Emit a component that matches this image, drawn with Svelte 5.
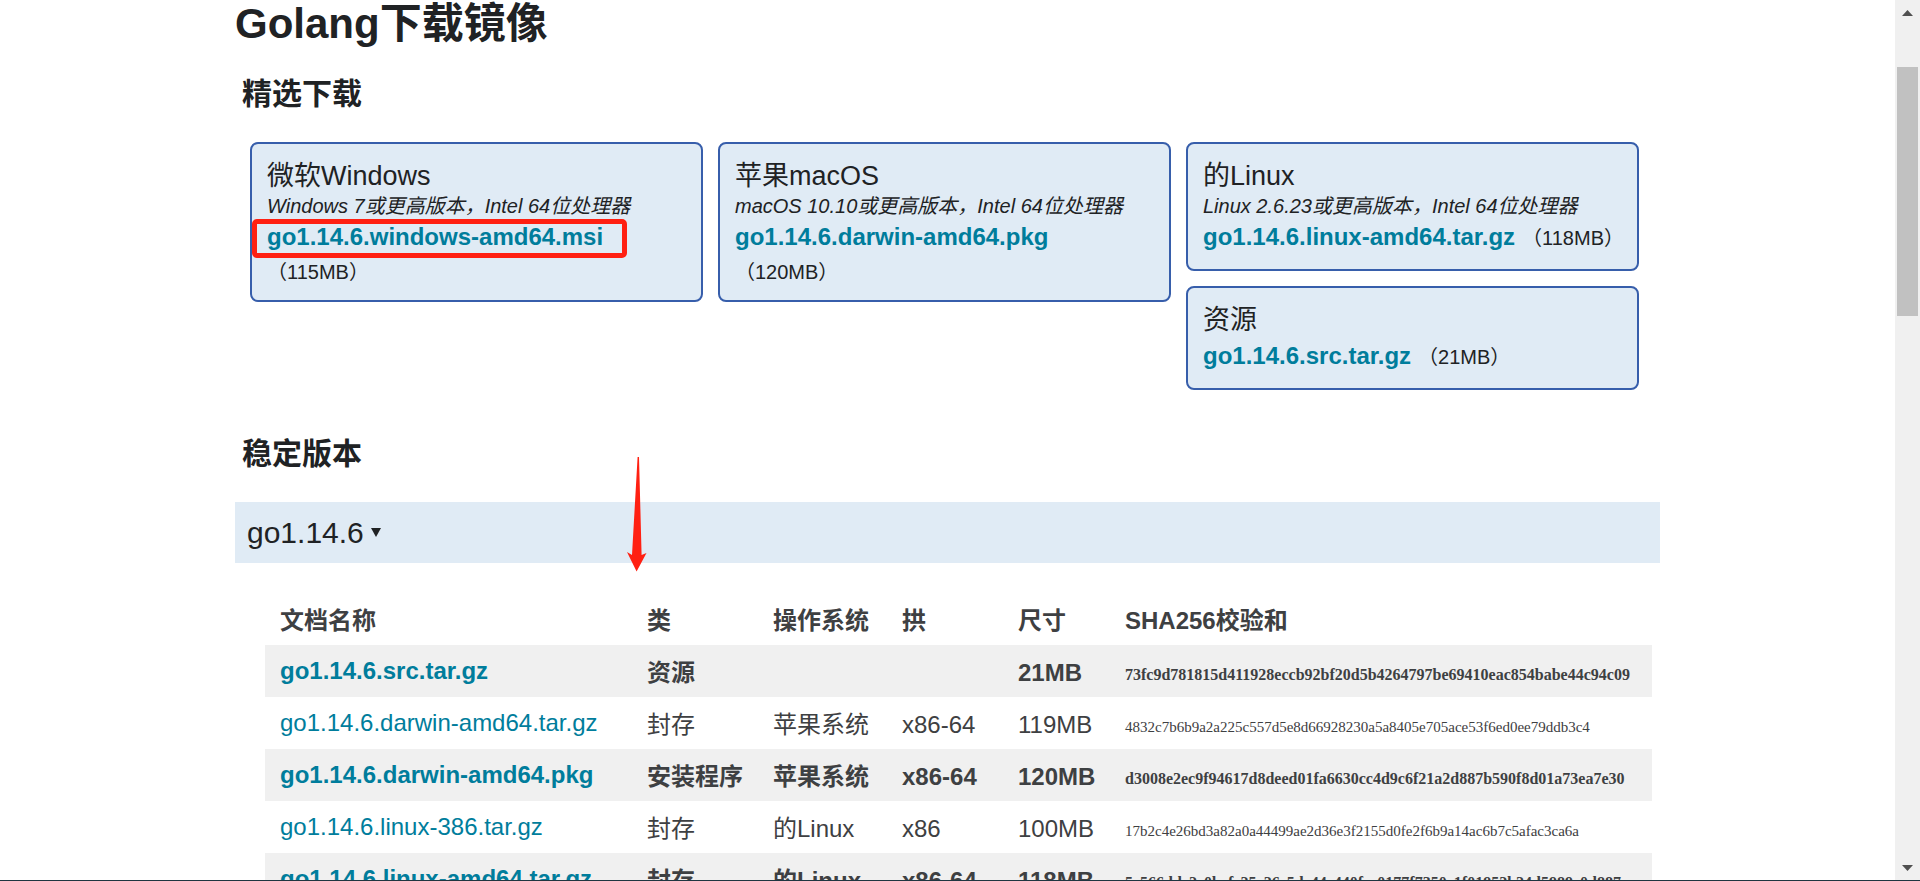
<script>
  const columns = [
    [
      {
        title: '微软Windows',
        note: 'Windows 7或更高版本，Intel 64位处理器',
        file: 'go1.14.6.windows-amd64.msi',
        size: '115MB',
        stacked: true,
        marked: true,
      },
    ],
    [
      {
        title: '苹果macOS',
        note: 'macOS 10.10或更高版本，Intel 64位处理器',
        file: 'go1.14.6.darwin-amd64.pkg',
        size: '120MB',
        stacked: true,
      },
    ],
    [
      {
        title: '的Linux',
        note: 'Linux 2.6.23或更高版本，Intel 64位处理器',
        file: 'go1.14.6.linux-amd64.tar.gz',
        size: '118MB',
      },
      { title: '资源', file: 'go1.14.6.src.tar.gz', size: '21MB' },
    ],
  ];

  const headers = ['文档名称', '类', '操作系统', '拱', '尺寸', 'SHA256校验和'];

  const rows = [
    { file: 'go1.14.6.src.tar.gz', kind: '资源', os: '', arch: '', size: '21MB', sha: '73fc9d781815d411928eccb92bf20d5b4264797be69410eac854babe44c94c09', main: true },
    { file: 'go1.14.6.darwin-amd64.tar.gz', kind: '封存', os: '苹果系统', arch: 'x86-64', size: '119MB', sha: '4832c7b6b9a2a225c557d5e8d66928230a5a8405e705ace53f6ed0ee79ddb3c4' },
    { file: 'go1.14.6.darwin-amd64.pkg', kind: '安装程序', os: '苹果系统', arch: 'x86-64', size: '120MB', sha: 'd3008e2ec9f94617d8deed01fa6630cc4d9c6f21a2d887b590f8d01a73ea7e30', main: true },
    { file: 'go1.14.6.linux-386.tar.gz', kind: '封存', os: '的Linux', arch: 'x86', size: '100MB', sha: '17b2c4e26bd3a82a0a44499ae2d36e3f2155d0fe2f6b9a14ac6b7c5afac3ca6a' },
    { file: 'go1.14.6.linux-amd64.tar.gz', kind: '封存', os: '的Linux', arch: 'x86-64', size: '118MB', sha: '5c566ddc2e0bcfc25c26c5dc44c440fcc0177f7350c1f01952b24d5989c0d887', main: true },
  ];
</script>

<div class="window" lang="zh-CN">
  <main>
    <div class="content">
      <h1>Golang下载镜像</h1>

      <h2>精选下载</h2>
      <div class="cards">
        {#each columns as column}
          <div class="column">
            {#each column as card}
              <section class="card">
                <h3>{card.title}</h3>
                {#if card.note}<p class="note">{card.note}</p>{/if}
                <div class="download" class:stacked={card.stacked}>
                  <a href="#{card.file}" class:marked={card.marked}>{card.file}</a>
                  <span class="size">（{card.size}）</span>
                </div>
              </section>
            {/each}
          </div>
        {/each}
      </div>

      <h2 class="stable">稳定版本</h2>
      <div class="version">
        <button type="button" aria-expanded="true">
          go1.14.6
          <svg width="10" height="9" viewBox="0 0 10 9" aria-hidden="true"><path d="M0 0H10L5 9Z" fill="currentColor" /></svg>
        </button>
        <svg class="arrow" width="20" height="115" viewBox="0 0 20 115" aria-hidden="true">
          <path d="M10.6 0H12L14.6 98L19.5 96L9.6 114.5L0 95L5 98Z" fill="#ff2012" />
        </svg>
      </div>

      <table>
        <colgroup>
          <col class="c-file" /><col class="c-kind" /><col class="c-os" /><col class="c-arch" /><col class="c-size" /><col />
        </colgroup>
        <thead>
          <tr>{#each headers as h}<th scope="col">{h}</th>{/each}</tr>
        </thead>
        <tbody>
          {#each rows as row}
            <tr class:main={row.main}>
              <td class="file"><a href="#{row.file}">{row.file}</a></td>
              <td>{row.kind}</td>
              <td>{row.os}</td>
              <td>{row.arch}</td>
              <td>{row.size}</td>
              <td class="sha">{row.sha}</td>
            </tr>
          {/each}
        </tbody>
      </table>
    </div>
  </main>

  <div class="scrollbar" aria-hidden="true">
    <svg width="11" height="6" viewBox="0 0 11 6"><path d="M0 6L5.5 0L11 6Z" fill="#505050" /></svg>
    <div class="track"><div class="thumb"></div></div>
    <svg width="11" height="6" viewBox="0 0 11 6"><path d="M0 0L5.5 6L11 0Z" fill="#505050" /></svg>
  </div>
</div>

<style>
  :global(body) {
    margin: 0;
    background: #fff;
  }

  .window {
    box-sizing: border-box;
    display: flex;
    height: 100vh;
    overflow: hidden;
    border-bottom: 1px solid #1f3540;
    color: #202224;
    font-family: 'Liberation Sans', Arial, 'Noto Sans CJK SC', sans-serif;
    font-size: 24px;
  }

  main {
    flex: 1;
    min-width: 0;
    overflow: hidden;
  }

  .content {
    max-width: 1425px;
    margin: 0 auto;
  }

  h1,
  h2,
  h3,
  p {
    margin: 0;
  }

  h1 {
    font-size: 42px;
    line-height: 48px;
  }

  h2 {
    padding: 29px 7px 31px;
    font-size: 30px;
    line-height: 34px;
  }

  h2.stable {
    padding-top: 32px;
  }

  .cards {
    display: grid;
    grid-template-columns: repeat(3, minmax(0, 1fr));
    gap: 15px;
    padding: 0 21px 15px 15px;
  }

  .column {
    display: flex;
    flex-direction: column;
    align-items: stretch;
    gap: 15px;
  }

  .card {
    padding: 15px 15px 14px;
    border: 2px solid #375eab;
    border-radius: 8px;
    background: #e0ebf5;
  }

  h3 {
    font-size: 27px;
    font-weight: 400;
    line-height: 35px;
  }

  .note {
    font-size: 20px;
    font-style: italic;
    line-height: 25px;
    white-space: nowrap;
  }

  .download {
    display: flex;
    align-items: baseline;
    gap: 7px;
    white-space: nowrap;
  }

  .stacked {
    flex-direction: column;
    gap: 0;
  }

  a {
    color: #007d9c;
    text-decoration: none;
  }

  .download a {
    font-weight: 700;
    line-height: 36px;
  }

  .size {
    margin-bottom: -4px;
    font-size: 20px;
    line-height: 35px;
  }

  .marked {
    position: relative;
  }

  .marked::after {
    content: '';
    position: absolute;
    inset: 0 -24px -3px -15px;
    border: 5px solid #ff2012;
    border-radius: 5px;
  }

  .version {
    position: relative;
    background: #e0ebf5;
  }

  .version button {
    display: flex;
    align-items: center;
    gap: 7px;
    width: 100%;
    padding: 12px;
    border: 0;
    background: none;
    color: inherit;
    font: inherit;
    font-size: 30px;
    line-height: 37px;
  }

  .arrow {
    position: absolute;
    top: -45px;
    left: 392px;
  }

  table {
    width: calc(100% - 38px);
    margin: 30px 8px 0 30px;
    border-collapse: collapse;
    table-layout: fixed;
    color: #3e4042;
  }

  .c-file {
    width: 367px;
  }

  .c-kind {
    width: 126px;
  }

  .c-os {
    width: 129px;
  }

  .c-arch {
    width: 116px;
  }

  .c-size {
    width: 107px;
  }

  th,
  td {
    height: 48px;
    padding: 4px 0 0 15px;
    line-height: 28px;
    text-align: left;
    white-space: nowrap;
  }

  .file {
    height: 52px;
    padding-top: 0;
  }

  .main {
    background: #f0f0f0;
    font-weight: 700;
  }

  .sha {
    height: 44px;
    padding-top: 8px;
    font-family: 'Liberation Serif', serif;
    font-size: 15px;
  }

  .main .sha {
    font-size: 16px;
  }

  .scrollbar {
    box-sizing: border-box;
    display: flex;
    flex-direction: column;
    align-items: center;
    width: 25px;
    padding: 10px 0 9px;
    background: #f0f0f0;
  }

  .track {
    flex: 1;
    align-self: stretch;
    padding: 51px 2px 0;
  }

  .thumb {
    height: 249px;
    background: #c1c1c1;
  }
</style>
